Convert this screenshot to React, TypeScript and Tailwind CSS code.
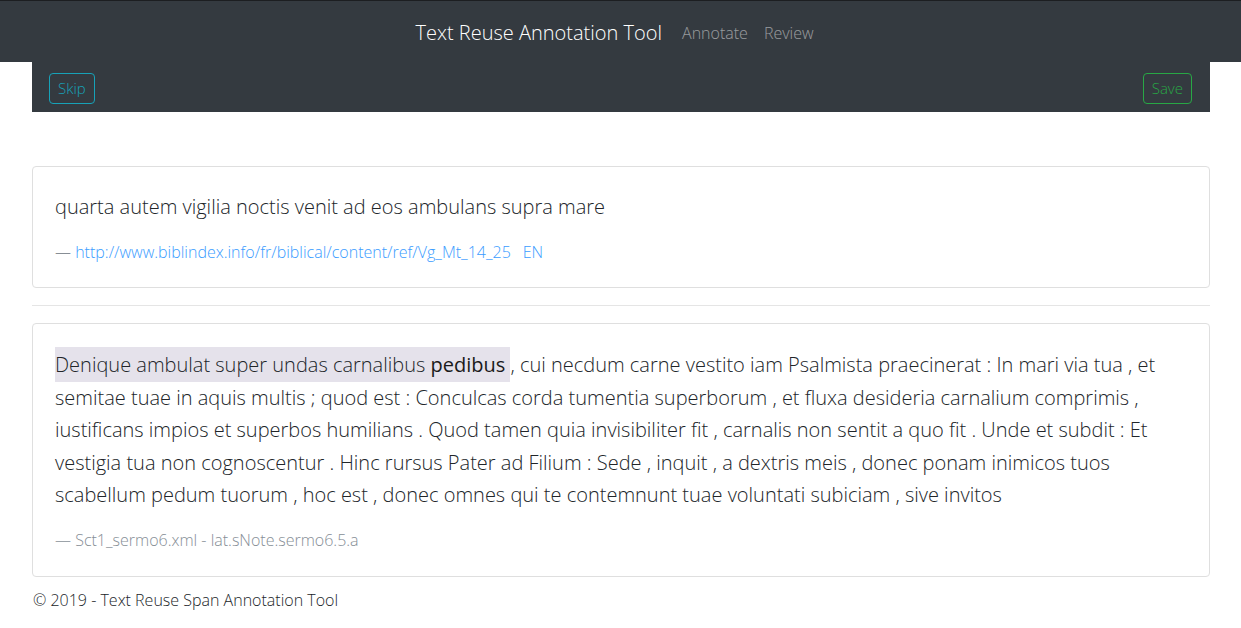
import React from "react";

const font = { fontFamily: '"Open Sans", "Noto Sans", "Liberation Sans", sans-serif' };

const App: React.FC = () => {
  return (
    <div className="min-h-screen bg-white text-[#212529] font-light" style={font}>
      {/* Top navbar */}
      <nav className="h-[62px] bg-[#343a40] border-t border-[#1c1e21] flex items-center justify-center pt-[3px] pr-[4px]">
        <span className="text-[20px] text-white mr-[12px]">Text Reuse Annotation Tool</span>
        <a className="text-[16px] text-white/50 px-[8px]">Annotate</a>
        <a className="text-[16px] text-white/50 px-[8px]">Review</a>
      </nav>

      <div className="ml-[32px] mr-[31px]">
        {/* Action bar */}
        <div className="h-[50px] bg-[#343a40] flex items-center justify-between pl-[17px] pr-[18px] pt-[2px]">
          <button className="h-[31px] px-[8px] border border-[#17a2b8] rounded text-[#17a2b8] text-[15px] leading-none">
            Skip
          </button>
          <button className="h-[31px] px-[8px] border border-[#28a745] rounded text-[#28a745] text-[15px] leading-none">
            Save
          </button>
        </div>

        {/* Source quote */}
        <div className="mt-[54px] border border-[#dfdfdf] rounded px-[22px] pt-[25px] pb-[23px]">
          <p className="text-[20px] leading-[30px]">quarta autem vigilia noctis venit ad eos ambulans supra mare</p>
          <p className="mt-[18px] text-[16px] leading-[24px] text-[#6c757d]">
            — <a className="text-[#3a9cff]">http://www.biblindex.info/fr/biblical/content/ref/Vg_Mt_14_25</a>
            <a className="text-[#3a9cff] ml-[12px]">EN</a>
          </p>
        </div>

        <hr className="mt-[17px] mb-[17px] border-t border-black/10" />

        {/* Target passage */}
        <div className="border border-[#dfdfdf] rounded px-[22px] pt-[25px] pb-[24px]">
          <p className="text-[20px] leading-[32.5px]">
            <span className="bg-[#e5e2eb] py-[4px]">
              Denique ambulat super undas carnalibus <span className="font-medium text-[#1a1a1a]">pedibus</span>{" "}
            </span>
            , cui necdum carne vestito iam Psalmista praecinerat : In mari via tua , et semitae tuae in aquis multis ;
            quod est : Conculcas corda tumentia superborum , et fluxa desideria carnalium comprimis , iustificans impios
            et superbos humilians . Quod tamen quia invisibiliter fit , carnalis non sentit a quo fit . Unde et subdit :
            Et vestigia tua non cognoscentur . Hinc rursus Pater ad Filium : Sede , inquit , a dextris meis , donec
            ponam inimicos tuos scabellum pedum tuorum , hoc est , donec omnes qui te contemnunt tuae voluntati
            subiciam , sive invitos
          </p>
          <p className="mt-[16px] text-[16px] leading-[24px] text-[#868e96]">— Sct1_sermo6.xml - lat.sNote.sermo6.5.a</p>
        </div>

        <footer className="mt-[11px] ml-[1px] text-[16px] leading-[24px]">© 2019 - Text Reuse Span Annotation Tool</footer>
      </div>
    </div>
  );
};

export default App;
